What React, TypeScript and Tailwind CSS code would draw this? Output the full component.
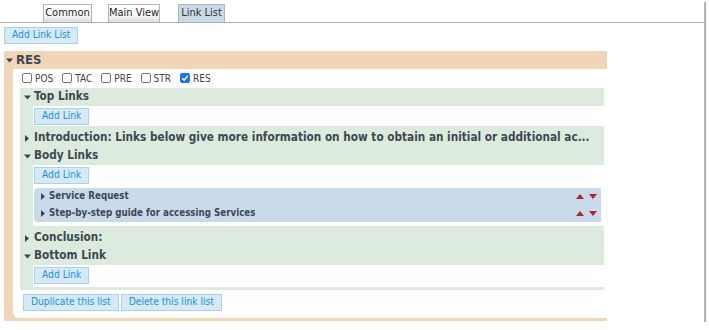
import React from 'react'

const font = { fontFamily: '"DejaVu Sans Condensed", "DejaVu Sans", Verdana, sans-serif' }

function Down({ className = '' }: { className?: string }) {
	return (
		<svg width="7" height="5" viewBox="0 0 7 5" className={className}>
			<path d="M0 0.5 H7 L3.5 4.5 Z" fill="#3a4550" />
		</svg>
	)
}

function Right({ className = '' }: { className?: string }) {
	return (
		<svg width="4" height="7" viewBox="0 0 4 7" className={className}>
			<path d="M0 0 V7 L4 3.5 Z" fill="#3a4550" />
		</svg>
	)
}

function Btn({ children }: { children: React.ReactNode }) {
	return (
		<button className="h-[17px] px-[7px] bg-[#d5e9f7] border border-[#a9d1ee] text-[#1f90d6] text-[10.2px] leading-none whitespace-nowrap">
			{children}
		</button>
	)
}

function Check({ label, checked = false }: { label: string; checked?: boolean }) {
	return (
		<label className="flex items-center gap-[3px] text-[10px] text-[#444]">
			{checked ? (
				<span className="w-[10px] h-[10px] rounded-[2px] bg-[#1a73e8] flex items-center justify-center">
					<svg width="8" height="8" viewBox="0 0 8 8">
						<path d="M1.2 4.2 L3.2 6.2 L6.8 1.8" stroke="white" strokeWidth="1.4" fill="none" />
					</svg>
				</span>
			) : (
				<span className="w-[10px] h-[10px] rounded-[2px] border border-[#777] bg-white" />
			)}
			<span>{label}</span>
		</label>
	)
}

function Header({ open, children }: { open: boolean; children: React.ReactNode }) {
	return (
		<div className="h-[18px] flex items-center pl-[4px] gap-[3px] text-[11.7px] font-bold text-[#3d4853] whitespace-nowrap">
			{open ? <Down /> : <Right className="ml-[1px] mr-[2px]" />}
			<span>{children}</span>
		</div>
	)
}

function Item({ title }: { title: string }) {
	return (
		<div className="h-[17px] flex items-center pl-[7px] pr-[4px] text-[9.7px] font-bold text-[#3d4853]">
			<Right className="mr-[4px]" />
			<span className="flex-1">{title}</span>
			<div className="flex gap-[5px] items-center">
				<svg width="8" height="5" viewBox="0 0 8 5">
					<path d="M0 5 H8 L4 0 Z" fill="#b0252a" />
				</svg>
				<svg width="8" height="5" viewBox="0 0 8 5">
					<path d="M0 0 H8 L4 5 Z" fill="#b0252a" />
				</svg>
			</div>
		</div>
	)
}

const tab = 'h-[18px] flex items-center justify-center border border-b-0 border-[#b5b5b5] text-[11px] whitespace-nowrap'

export default function App() {
	return (
		<div style={font} className="w-[704px] h-[322px] bg-white shadow-[2px_2px_1px_#b4b4b4]">
			{/* tabs */}
			<div className="flex items-end h-[23px] border-b border-[#9fb3c3] pl-[43px]">
				<div className={`${tab} w-[49px] bg-gradient-to-b from-white via-white to-[#dcdcdc] text-[#222]`}>Common</div>
				<div className={`${tab} ml-[16px] w-[52px] bg-gradient-to-b from-white via-white to-[#dcdcdc] text-[#222]`}>Main View</div>
				<div className={`${tab} ml-[18px] w-[47px] bg-[#c9d9e8] text-[#333]`}>Link List</div>
			</div>

			<div className="flex pl-[4px] pt-[4px]">
				<Btn>Add Link List</Btn>
			</div>

			{/* RES panel */}
			<div className="mt-[7px] ml-[4px] w-[603px] bg-[#f0d6b7] pb-[3px]">
				<div className="h-[18px] flex items-center pl-[2px] gap-[3px] text-[13px] font-bold text-[#3d4853]">
					<Down />
					<span>RES</span>
				</div>
				<div className="ml-[9px] bg-white rounded-bl-[6px] pt-[2px] pb-[7px]">
					<div className="flex items-center gap-[9px] pl-[9px] h-[14px]">
						<Check label="POS" />
						<Check label="TAC" />
						<Check label="PRE" />
						<Check label="STR" />
						<Check label="RES" checked />
					</div>

					<div className="mt-[3px] ml-[7px] mr-[3px] bg-[#dcebdd] pb-[3px]">
						<Header open>Top Links</Header>
						<div className="flex ml-[13px] bg-white pt-[2px] pb-[1px] pl-[1px]">
							<Btn>Add Link</Btn>
						</div>
						<div className="h-[3px]" />
						<Header open={false}>
							Introduction: Links below give more information on how to obtain an initial or additional ac...
						</Header>
						<Header open>Body Links</Header>
						<div className="flex flex-col items-start ml-[13px] bg-white pt-[2px] pb-[4px] pl-[1px] pr-[3px]">
							<Btn>Add Link</Btn>
							<div className="self-stretch mt-[4px] bg-[#c9dbeb] rounded-l-[4px]">
								<Item title="Service Request" />
								<Item title="Step-by-step guide for accessing Services" />
							</div>
						</div>
						<div className="h-[3px]" />
						<Header open={false}>Conclusion:</Header>
						<Header open>Bottom Link</Header>
						<div className="flex ml-[13px] bg-white pt-[2px] pb-[3px] pl-[1px]">
							<Btn>Add Link</Btn>
						</div>
					</div>

					<div className="mt-[4px] ml-[10px] flex gap-[2px]">
						<Btn>Duplicate this list</Btn>
						<Btn>Delete this link list</Btn>
					</div>
				</div>
			</div>
		</div>
	)
}
